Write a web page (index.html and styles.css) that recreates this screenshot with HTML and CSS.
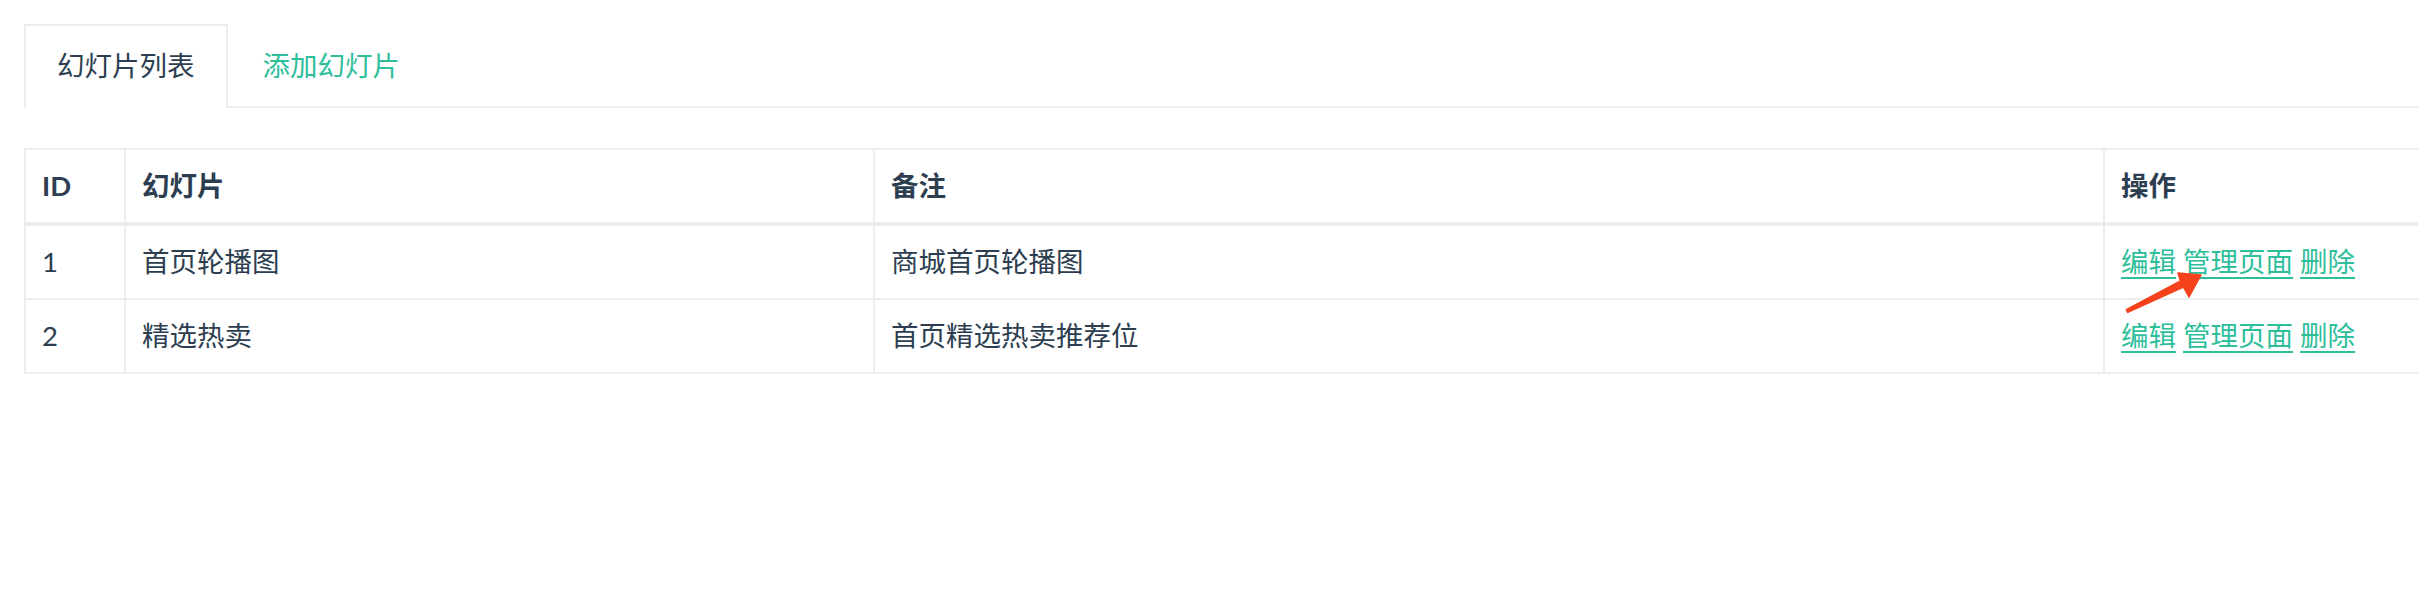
FILE: index.html
```html
<!DOCTYPE html>
<html lang="zh-CN">
<head>
  <meta charset="UTF-8">
  <title>幻灯片列表</title>
  <link rel="stylesheet" href="styles.css">
</head>
<body>
  <div class="page">
    <ul class="tabs">
      <li class="active"><a href="#">幻灯片列表</a></li>
      <li><a href="#">添加幻灯片</a></li>
    </ul>

    <table class="slide-table">
      <colgroup>
        <col class="col-id">
        <col class="col-name">
        <col class="col-note">
        <col>
      </colgroup>
      <thead>
        <tr>
          <th>ID</th>
          <th>幻灯片</th>
          <th>备注</th>
          <th>操作</th>
        </tr>
      </thead>
      <tbody>
        <tr>
          <td>1</td>
          <td>首页轮播图</td>
          <td>商城首页轮播图</td>
          <td class="ops">
            <a href="#">编辑</a> <a href="#">管理页面</a> <a href="#">删除</a>
            <svg class="pointer" width="80" height="44" viewBox="0 0 80 44">
              <path d="M2.7 41.4 L58.5 16.1 L64 26 L76 4 L53 2 L55.5 9.9 L1.3 38.6 Z" fill="#f5421d" stroke="#f5421d" stroke-width="1.5" stroke-linejoin="round"/>
            </svg>
          </td>
        </tr>
        <tr>
          <td>2</td>
          <td>精选热卖</td>
          <td>首页精选热卖推荐位</td>
          <td class="ops">
            <a href="#">编辑</a> <a href="#">管理页面</a> <a href="#">删除</a>
          </td>
        </tr>
      </tbody>
    </table>
  </div>
</body>
</html>
```

FILE: styles.css
```css
* {
  box-sizing: border-box;
  margin: 0;
  padding: 0;
}

html {
  overflow: hidden;
}

body {
  font-family: Lato, "Noto Sans CJK SC", sans-serif;
  font-size: 27.5px;
  color: #2c3e50;
  background-color: #fff;
  padding: 24px 0 0 24px;
}

.page {
  width: 2500px;
}

/* tabs */
.tabs {
  list-style: none;
  display: flex;
  border-bottom: 2px solid #eaeeef;
}

.tabs li {
  margin-bottom: -2px;
  margin-right: 2px;
  border: 2px solid transparent;
  border-bottom: none;
}

.tabs li a {
  display: block;
  padding: 19px 31px 21px;
  line-height: 42px;
  color: #2dbe9b;
  text-decoration: none;
}

.tabs li.active {
  border-color: #eaeeef;
  background-color: #fff;
}

.tabs li.active a {
  color: #2c3e50;
}

/* table */
.slide-table {
  margin-top: 40px;
  width: 100%;
  table-layout: fixed;
  border-collapse: collapse;
}

.col-id {
  width: 100px;
}

.col-name {
  width: 749px;
}

.col-note {
  width: 1230px;
}

.slide-table th,
.slide-table td {
  border: 2px solid #eaeeef;
  padding: 16px 16px;
  line-height: 40px;
  text-align: left;
  white-space: nowrap;
}

.slide-table th {
  font-weight: 700;
  border-bottom-width: 4px;
}

.ops {
  position: relative;
}

.ops a {
  color: #2dbe9b;
  text-decoration: underline;
  text-underline-offset: 5px;
}

.pointer {
  position: absolute;
  left: 20px;
  top: 45px;
}
```
